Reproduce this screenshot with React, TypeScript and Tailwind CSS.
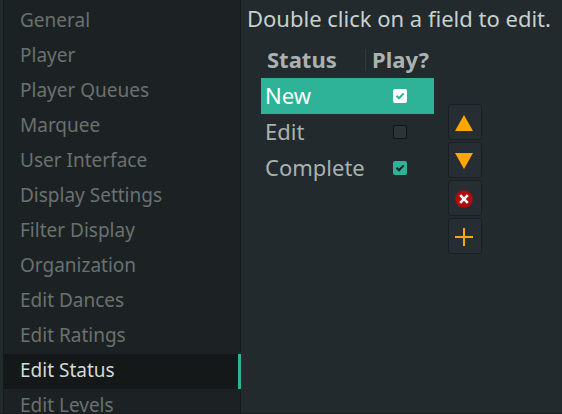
import { useState } from "react";

const sections = [
  "General",
  "Player",
  "Player Queues",
  "Marquee",
  "User Interface",
  "Display Settings",
  "Filter Display",
  "Organization",
  "Edit Dances",
  "Edit Ratings",
  "Edit Status",
  "Edit Levels",
];

const initialRows = [
  { name: "New", play: true },
  { name: "Edit", play: false },
  { name: "Complete", play: true },
];

function Sidebar({ active, onSelect }: { active: string; onSelect: (name: string) => void }) {
  return (
    <nav
      aria-label="Settings"
      className="ml-[3px] flex w-[238px] shrink-0 flex-col border-x border-[#14191a] bg-[#1c2223] pt-1"
    >
      {sections.map((name) => (
        <button
          key={name}
          type="button"
          aria-current={name === active ? "page" : undefined}
          onClick={() => onSelect(name)}
          className={
            name === active
              ? "-mr-px h-[35px] shrink-0 border-r-[3px] border-[#2eb398] bg-[#151819] px-4 pb-[3px] text-left text-[19px] leading-7 text-[#d3dad8]"
              : "h-[35px] shrink-0 px-4 pb-[3px] text-left text-[19px] leading-7 text-[#6a716f]"
          }
        >
          {name}
        </button>
      ))}
    </nav>
  );
}

function PlayCheckbox({
  label,
  checked,
  selected,
  onChange,
}: {
  label: string;
  checked: boolean;
  selected: boolean;
  onChange: () => void;
}) {
  const box = !checked
    ? "border border-[#101415] bg-[#2c3434]"
    : selected
      ? "bg-white"
      : "bg-[#2eb398]";
  return (
    <label className="mx-auto grid size-[14px] place-items-center">
      <input
        type="checkbox"
        aria-label={label}
        checked={checked}
        onChange={onChange}
        className={`col-start-1 row-start-1 size-[14px] appearance-none rounded-xs ${box}`}
      />
      {checked && (
        <svg
          viewBox="0 0 14 14"
          aria-hidden="true"
          className={`pointer-events-none col-start-1 row-start-1 size-[14px] ${selected ? "text-[#2eb398]" : "text-[#1c2223]"}`}
        >
          <path d="M3.5 6.8 6 9.3 10.7 4.4" fill="none" stroke="currentColor" strokeWidth="2" />
        </svg>
      )}
    </label>
  );
}

const tools = [
  { label: "Move up", icon: <path d="M9 1 18 17H0Z" fill="#ffa600" /> },
  { label: "Move down", icon: <path d="M0 1H18L9 17Z" fill="#ffa600" /> },
  {
    label: "Delete",
    icon: (
      <>
        <circle cx="9" cy="9" r="8.8" fill="#b00c0c" />
        <path d="M5.2 5.2 12.8 12.8M12.8 5.2 5.2 12.8" stroke="#fff" strokeWidth="2.6" />
      </>
    ),
  },
  { label: "Add", icon: <path d="M9 0V18M0 9H18" stroke="#ffa600" strokeWidth="2" /> },
];

export default function App() {
  const [active, setActive] = useState("Edit Status");
  const [rows, setRows] = useState(initialRows);
  const [current, setCurrent] = useState(0);

  const toggle = (index: number) =>
    setRows(rows.map((row, i) => (i === index ? { ...row, play: !row.play } : row)));

  return (
    <div className="flex h-screen overflow-hidden border-b border-[#181d1f] bg-[#222a2d] font-['Noto_Sans',sans-serif]">
      <Sidebar active={active} onSelect={setActive} />
      <main className="min-w-0 flex-1 px-1.5 pt-1 text-[22px] leading-7 text-[#a9b2b0]">
        <p className="whitespace-nowrap text-[#c8d0ce]">Double click on a field to edit.</p>
        <div className="flex items-start gap-[14px] pt-2.5 pl-[14px]">
          <table className="w-[173px] table-fixed border-collapse text-left">
            <thead>
              <tr className="h-9">
                <th scope="col" className="w-[105px] p-0">
                  <div className="flex h-[22px] items-center border-r border-[#343b3e] pb-0.5 pl-1.5">Status</div>
                </th>
                <th scope="col" className="p-0 pl-1.5">
                  <div className="flex h-[22px] items-center pb-0.5">Play?</div>
                </th>
              </tr>
            </thead>
            <tbody>
              {rows.map((row, i) => (
                <tr
                  key={row.name}
                  onClick={() => setCurrent(i)}
                  className={i === current ? "h-9 bg-[#2eb398] text-white" : "h-9"}
                >
                  <td className="p-0 pb-0.5 pl-1">{row.name}</td>
                  <td className="p-0">
                    <PlayCheckbox
                      label={`Play ${row.name}`}
                      checked={row.play}
                      selected={i === current}
                      onChange={() => toggle(i)}
                    />
                  </td>
                </tr>
              ))}
            </tbody>
          </table>
          <div className="flex flex-col gap-0.5 pt-[62px]">
            {tools.map((tool) => (
              <button
                key={tool.label}
                type="button"
                aria-label={tool.label}
                className="flex h-9 w-[34px] items-center justify-center rounded-[3px] border border-[#1a2022] bg-[#262e33] pt-0.5 pr-0.5"
              >
                <svg viewBox="0 0 18 18" aria-hidden="true" className="size-[18px]">
                  {tool.icon}
                </svg>
              </button>
            ))}
          </div>
        </div>
      </main>
    </div>
  );
}
